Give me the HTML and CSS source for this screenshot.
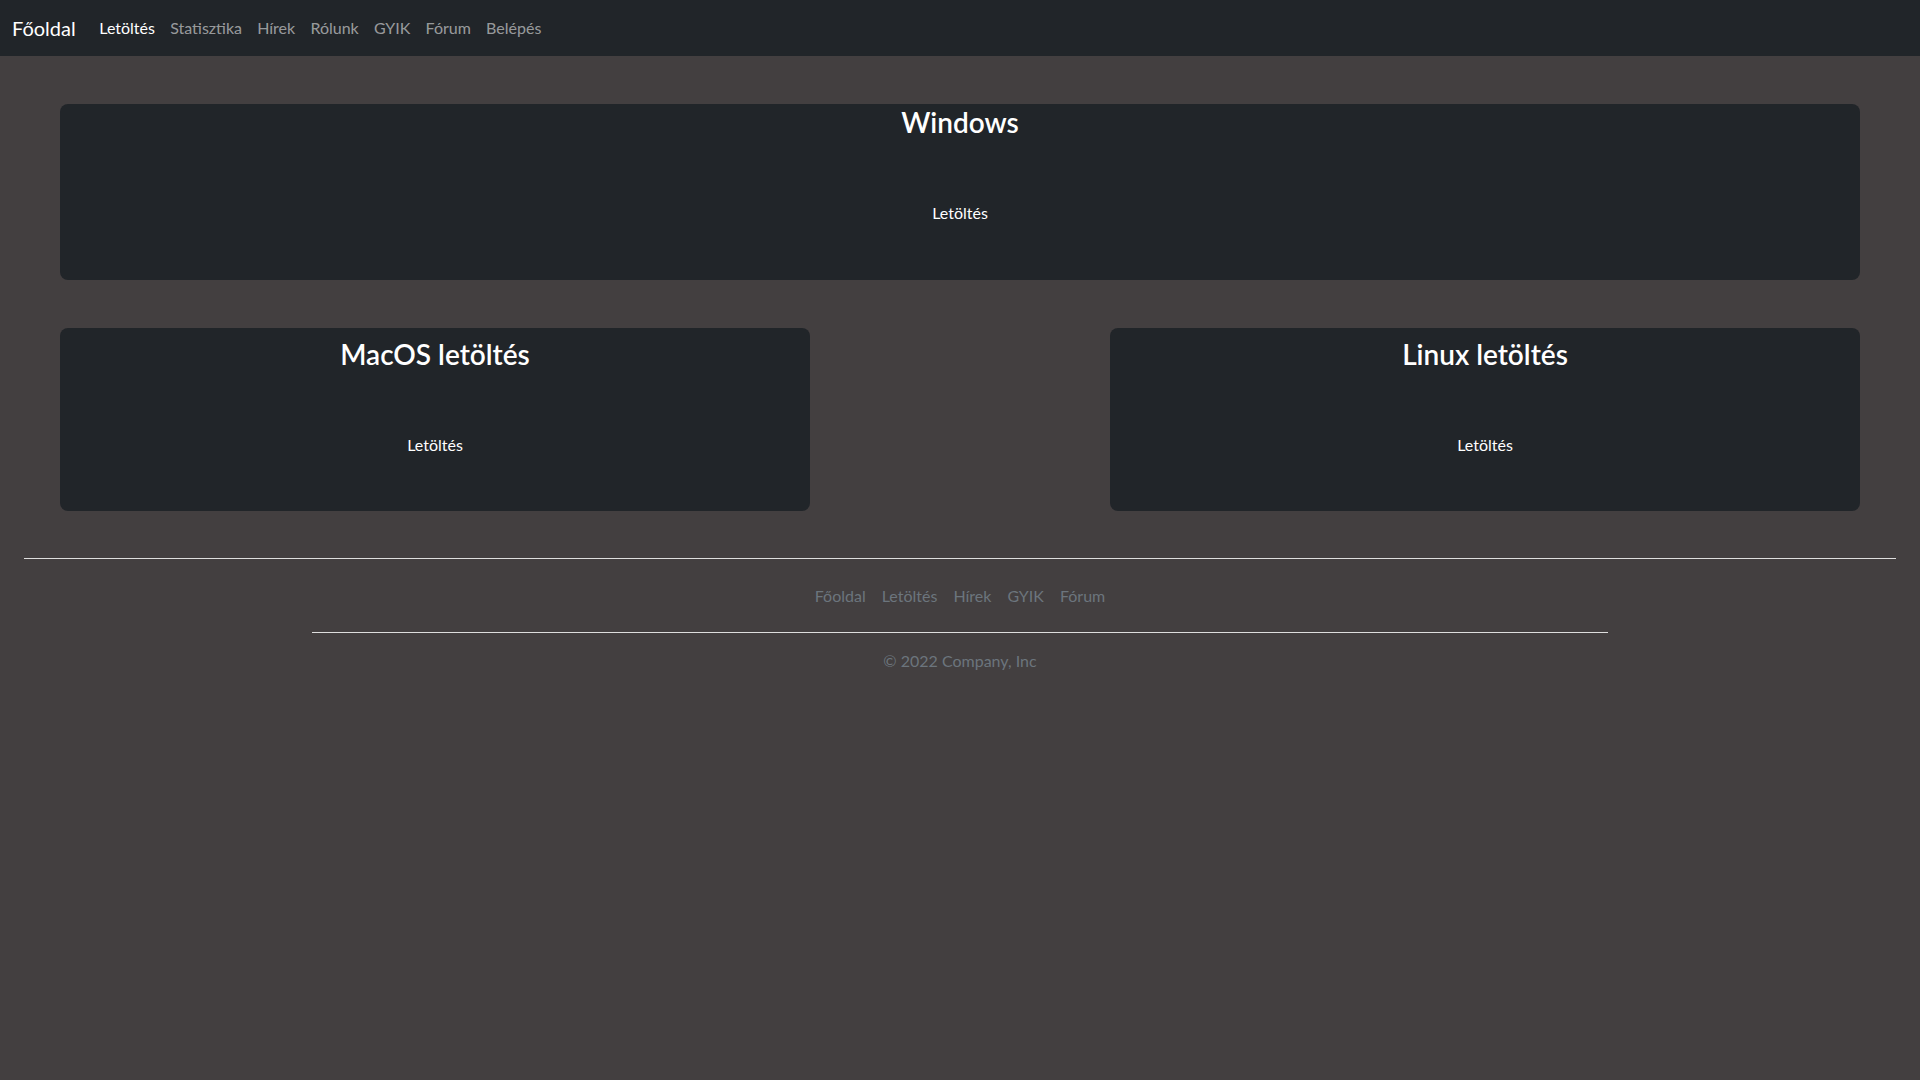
FILE: index.html
```html
<!DOCTYPE html>
<html lang="hu">
<head>
<meta charset="utf-8">
<title>Letöltés</title>
<link rel="stylesheet" href="styles.css">
</head>
<body>
<nav class="navbar">
  <a class="brand" href="#">Főoldal</a>
  <ul class="nav-links">
    <li><a class="nav-link active" href="#">Letöltés</a></li>
    <li><a class="nav-link" href="#">Statisztika</a></li>
    <li><a class="nav-link" href="#">Hírek</a></li>
    <li><a class="nav-link" href="#">Rólunk</a></li>
    <li><a class="nav-link" href="#">GYIK</a></li>
    <li><a class="nav-link" href="#">Fórum</a></li>
    <li><a class="nav-link" href="#">Belépés</a></li>
  </ul>
</nav>

<main class="content">
  <section class="card card-wide">
    <h2 class="card-title">Windows</h2>
    <a class="dl" href="#">Letöltés</a>
  </section>
  <div class="card-row">
    <section class="card card-half">
      <h2 class="card-title">MacOS letöltés</h2>
      <a class="dl" href="#">Letöltés</a>
    </section>
    <section class="card card-half">
      <h2 class="card-title">Linux letöltés</h2>
      <a class="dl" href="#">Letöltés</a>
    </section>
  </div>
</main>

<hr class="divider">

<footer class="footer">
  <ul class="footer-nav">
    <li><a href="#">Főoldal</a></li>
    <li><a href="#">Letöltés</a></li>
    <li><a href="#">Hírek</a></li>
    <li><a href="#">GYIK</a></li>
    <li><a href="#">Fórum</a></li>
  </ul>
  <p class="copy">© 2022 Company, Inc</p>
</footer>
</body>
</html>
```

FILE: styles.css
```css
html, body {
  margin: 0;
  padding: 0;
}
body {
  background: #433f40;
  color: #fff;
  font-family: Lato, "Noto Sans", "Liberation Sans", sans-serif;
  font-size: 16px;
  line-height: 1.5;
}
a { text-decoration: none; }

.navbar {
  display: flex;
  align-items: center;
  height: 56px;
  padding: 0 12px;
  background: #212529;
  box-sizing: border-box;
}
.brand {
  color: #fff;
  font-size: 20px;
  line-height: 30px;
  margin-right: 16px;
}
.nav-links {
  display: flex;
  list-style: none;
  margin: 0;
  padding: 0;
}
.nav-link {
  display: block;
  padding: 8px 7.6px;
  color: rgba(255, 255, 255, 0.55);
}
.nav-link.active { color: #fff; }

.content {
  padding: 48px 60px 0;
}
.card {
  background: #212529;
  border-radius: 8px;
  display: flex;
  flex-direction: column;
  align-items: center;
  box-sizing: border-box;
}
.card-wide {
  padding: 0 0 55px;
}
.card-half {
  width: 750px;
  padding: 8px 0 54px;
}
.card-title {
  margin: -1px 0 60px;
  font-size: 28px;
  font-weight: 600;
  line-height: 38px;
}
.dl {
  color: #fff;
  line-height: 24px;
}
.card-row {
  display: flex;
  justify-content: space-between;
  margin-top: 48px;
}

.divider {
  margin: 47px 24px 0;
  border: 0;
  border-top: 1px solid #dedede;
  height: 0;
}

.footer {
  width: 1296px;
  margin: 17px auto 0;
}
.footer-nav {
  display: flex;
  justify-content: center;
  list-style: none;
  margin: 0 0 16px;
  padding: 0 0 16px;
  border-bottom: 1px solid #dedede;
}
.footer-nav a {
  display: block;
  padding: 8px;
  color: #6c757d;
}
.copy {
  margin: 0;
  text-align: center;
  color: #6c757d;
}
```
